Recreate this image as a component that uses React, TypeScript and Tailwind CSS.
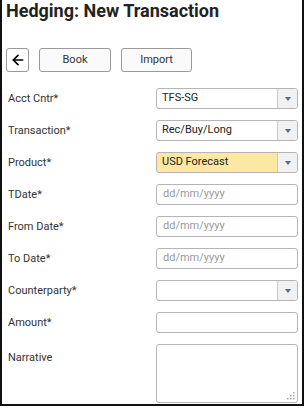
import { ArrowLeft } from "lucide-react";

type Field = { label: string; kind: "select" | "date" | "text" | "area"; value?: string; yellow?: boolean };

const fields: Field[] = [
  { label: "Acct Cntr*", kind: "select", value: "TFS-SG" },
  { label: "Transaction*", kind: "select", value: "Rec/Buy/Long" },
  { label: "Product*", kind: "select", value: "USD Forecast", yellow: true },
  { label: "TDate*", kind: "date" },
  { label: "From Date*", kind: "date" },
  { label: "To Date*", kind: "date" },
  { label: "Counterparty*", kind: "select", value: "" },
  { label: "Amount*", kind: "text" },
  { label: "Narrative", kind: "area" },
];

function Control({ f }: { f: Field }) {
  if (f.kind === "select") {
    return (
      <div
        className={`flex h-[21px] w-[142px] items-stretch overflow-hidden rounded-[3px] border border-[#b5b5b5] ${
          f.yellow ? "bg-[#fce8a2]" : "bg-white"
        }`}
      >
        <span className="flex flex-1 items-center pl-[5px] text-[11px] text-[#222]">{f.value}</span>
        <span className="flex w-[20px] items-center justify-center border-l border-[#c8c8c8] bg-[#f2f2f2]">
          <span className="h-0 w-0 border-x-[3px] border-t-[4px] border-x-transparent border-t-[#5a6a7a]" />
        </span>
      </div>
    );
  }
  if (f.kind === "area") {
    return (
      <div className="relative h-[59px] w-[142px] rounded-[3px] border border-[#b5b5b5] bg-white">
        <svg className="absolute bottom-[2px] right-[2px]" width="8" height="8" viewBox="0 0 8 8">
          <rect x="6" y="0" width="1.5" height="1.5" fill="#aaa" />
          <rect x="3" y="3" width="1.5" height="1.5" fill="#aaa" />
          <rect x="6" y="3" width="1.5" height="1.5" fill="#aaa" />
          <rect x="0" y="6" width="1.5" height="1.5" fill="#aaa" />
          <rect x="3" y="6" width="1.5" height="1.5" fill="#aaa" />
          <rect x="6" y="6" width="1.5" height="1.5" fill="#aaa" />
        </svg>
      </div>
    );
  }
  return (
    <div className="flex h-[21px] w-[142px] items-center rounded-[3px] border border-[#b5b5b5] bg-white pl-[6px] text-[11px] text-[#9a9a9a]">
      {f.kind === "date" ? "dd/mm/yyyy" : ""}
    </div>
  );
}

export default function App() {
  return (
    <div className="h-[409px] w-[306px] bg-white font-['Roboto',sans-serif]">
      <div className="h-[406px] w-[304px] border-x-2 border-b-2 border-[#111]">
        <h1 className="pl-[4px] text-[18px] font-bold leading-[22px] text-[#222]">Hedging: New Transaction</h1>

        <div className="mt-[26px] flex gap-[10px] pl-[4px]">
          <button className="flex h-[24px] w-[23px] items-center justify-center rounded-[3px] border border-[#9a9a9a] bg-white">
            <ArrowLeft className="h-[16px] w-[16px] text-black" strokeWidth={2.5} />
          </button>
          <button className="h-[24px] w-[72px] rounded-[3px] border border-[#9a9a9a] bg-[#fafafa] text-[11px] text-[#333]">
            Book
          </button>
          <button className="h-[24px] w-[71px] rounded-[3px] border border-[#9a9a9a] bg-[#fafafa] text-[11px] text-[#333]">
            Import
          </button>
        </div>

        <div className="mt-[16px] flex flex-col gap-[11px]">
          {fields.map((f) => (
            <div key={f.label} className="flex items-start">
              <span
                className={`w-[154px] pl-[6px] text-[11px] leading-[21px] text-[#333] ${
                  f.kind === "area" ? "pt-[3px]" : ""
                }`}
              >
                {f.label}
              </span>
              <Control f={f} />
            </div>
          ))}
        </div>
      </div>
    </div>
  );
}
